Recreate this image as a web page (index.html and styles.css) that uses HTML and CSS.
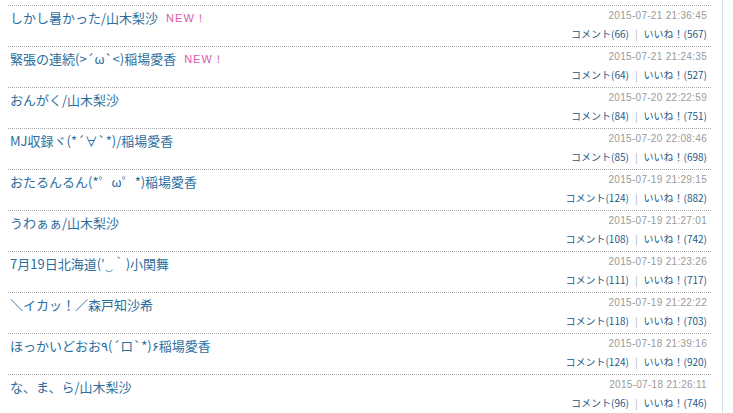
FILE: index.html
```html
<!DOCTYPE html>
<html>
	<head>
		<meta charset="UTF-8" />
		<title>ブログ一覧</title>
		<link rel="stylesheet" href="styles.css">
	</head>
	<body>
		<div id="entry-frame">
			<ul class="entry-list">
				<li class="entry">
					<a class="entry-title" href="#">しかし暑かった/山木梨沙</a><span class="new-mark">NEW！</span>
					<div class="entry-meta">
						<div class="entry-date">2015-07-21 21:36:45</div>
						<div class="entry-links"><a href="#">コメント(66)</a><span class="sep">|</span><a href="#">いいね！(567)</a></div>
					</div>
				</li>
				<li class="entry">
					<a class="entry-title" href="#">緊張の連続(&gt;´ω`&lt;)稲場愛香</a><span class="new-mark">NEW！</span>
					<div class="entry-meta">
						<div class="entry-date">2015-07-21 21:24:35</div>
						<div class="entry-links"><a href="#">コメント(64)</a><span class="sep">|</span><a href="#">いいね！(527)</a></div>
					</div>
				</li>
				<li class="entry">
					<a class="entry-title" href="#">おんがく/山木梨沙</a>
					<div class="entry-meta">
						<div class="entry-date">2015-07-20 22:22:59</div>
						<div class="entry-links"><a href="#">コメント(84)</a><span class="sep">|</span><a href="#">いいね！(751)</a></div>
					</div>
				</li>
				<li class="entry">
					<a class="entry-title" href="#">MJ収録ヾ(*´∀`*)/稲場愛香</a>
					<div class="entry-meta">
						<div class="entry-date">2015-07-20 22:08:46</div>
						<div class="entry-links"><a href="#">コメント(85)</a><span class="sep">|</span><a href="#">いいね！(698)</a></div>
					</div>
				</li>
				<li class="entry">
					<a class="entry-title" href="#">おたるんるん(*゜ω゜*)稲場愛香</a>
					<div class="entry-meta">
						<div class="entry-date">2015-07-19 21:29:15</div>
						<div class="entry-links"><a href="#">コメント(124)</a><span class="sep">|</span><a href="#">いいね！(882)</a></div>
					</div>
				</li>
				<li class="entry">
					<a class="entry-title" href="#">うわぁぁ/山木梨沙</a>
					<div class="entry-meta">
						<div class="entry-date">2015-07-19 21:27:01</div>
						<div class="entry-links"><a href="#">コメント(108)</a><span class="sep">|</span><a href="#">いいね！(742)</a></div>
					</div>
				</li>
				<li class="entry">
					<a class="entry-title" href="#">7月19日北海道(&#x2032;&#x203F;&#x2035;)小関舞</a>
					<div class="entry-meta">
						<div class="entry-date">2015-07-19 21:23:26</div>
						<div class="entry-links"><a href="#">コメント(111)</a><span class="sep">|</span><a href="#">いいね！(717)</a></div>
					</div>
				</li>
				<li class="entry">
					<a class="entry-title" href="#">＼イカッ！／森戸知沙希</a>
					<div class="entry-meta">
						<div class="entry-date">2015-07-19 21:22:22</div>
						<div class="entry-links"><a href="#">コメント(118)</a><span class="sep">|</span><a href="#">いいね！(703)</a></div>
					</div>
				</li>
				<li class="entry">
					<a class="entry-title" href="#">ほっかいどおお٩(´ロ`*)۶稲場愛香</a>
					<div class="entry-meta">
						<div class="entry-date">2015-07-18 21:39:16</div>
						<div class="entry-links"><a href="#">コメント(124)</a><span class="sep">|</span><a href="#">いいね！(920)</a></div>
					</div>
				</li>
				<li class="entry">
					<a class="entry-title" href="#">な、ま、ら/山木梨沙</a>
					<div class="entry-meta">
						<div class="entry-date">2015-07-18 21:26:11</div>
						<div class="entry-links"><a href="#">コメント(96)</a><span class="sep">|</span><a href="#">いいね！(746)</a></div>
					</div>
				</li>
			</ul>
		</div>
	</body>
</html>
```

FILE: styles.css
```css
body {
	margin: 0;
	background: #fff;
	font-family: "Noto Sans CJK JP", "Liberation Sans", sans-serif;
}
a {
	text-decoration: none;
}
#entry-frame {
	width: 722px;
	height: 413px;
	border-right: 1px solid #d6e0e8;
	overflow: hidden;
}
.entry-list {
	list-style: none;
	margin: 0;
	padding: 5px 11px 0 8px;
}
.entry {
	display: flex;
	align-items: flex-start;
	height: 40px;
	border-top: 1px dotted #a8a8a8;
}
.entry-title {
	color: #2b6e9e;
	font-size: 13px;
	line-height: 16px;
	margin-top: 4px;
	padding-left: 2px;
}
.new-mark {
	color: #d85aa8;
	font-family: "Liberation Sans", sans-serif;
	font-size: 11px;
	line-height: 16px;
	letter-spacing: 1px;
	margin: 4px 0 0 8px;
}
.entry-meta {
	margin-left: auto;
	padding-right: 4px;
	text-align: right;
}
.entry-date {
	color: #9a9a9a;
	font-family: "Liberation Sans", sans-serif;
	font-size: 10px;
	letter-spacing: 0.3px;
	line-height: 12px;
	margin-top: 4px;
}
.entry-links {
	font-size: 10px;
	line-height: 14px;
	margin-top: 5px;
}
.entry-links a {
	color: #1e5b86;
}
.sep {
	color: #b0b0b0;
	margin: 0 6px;
}
```
